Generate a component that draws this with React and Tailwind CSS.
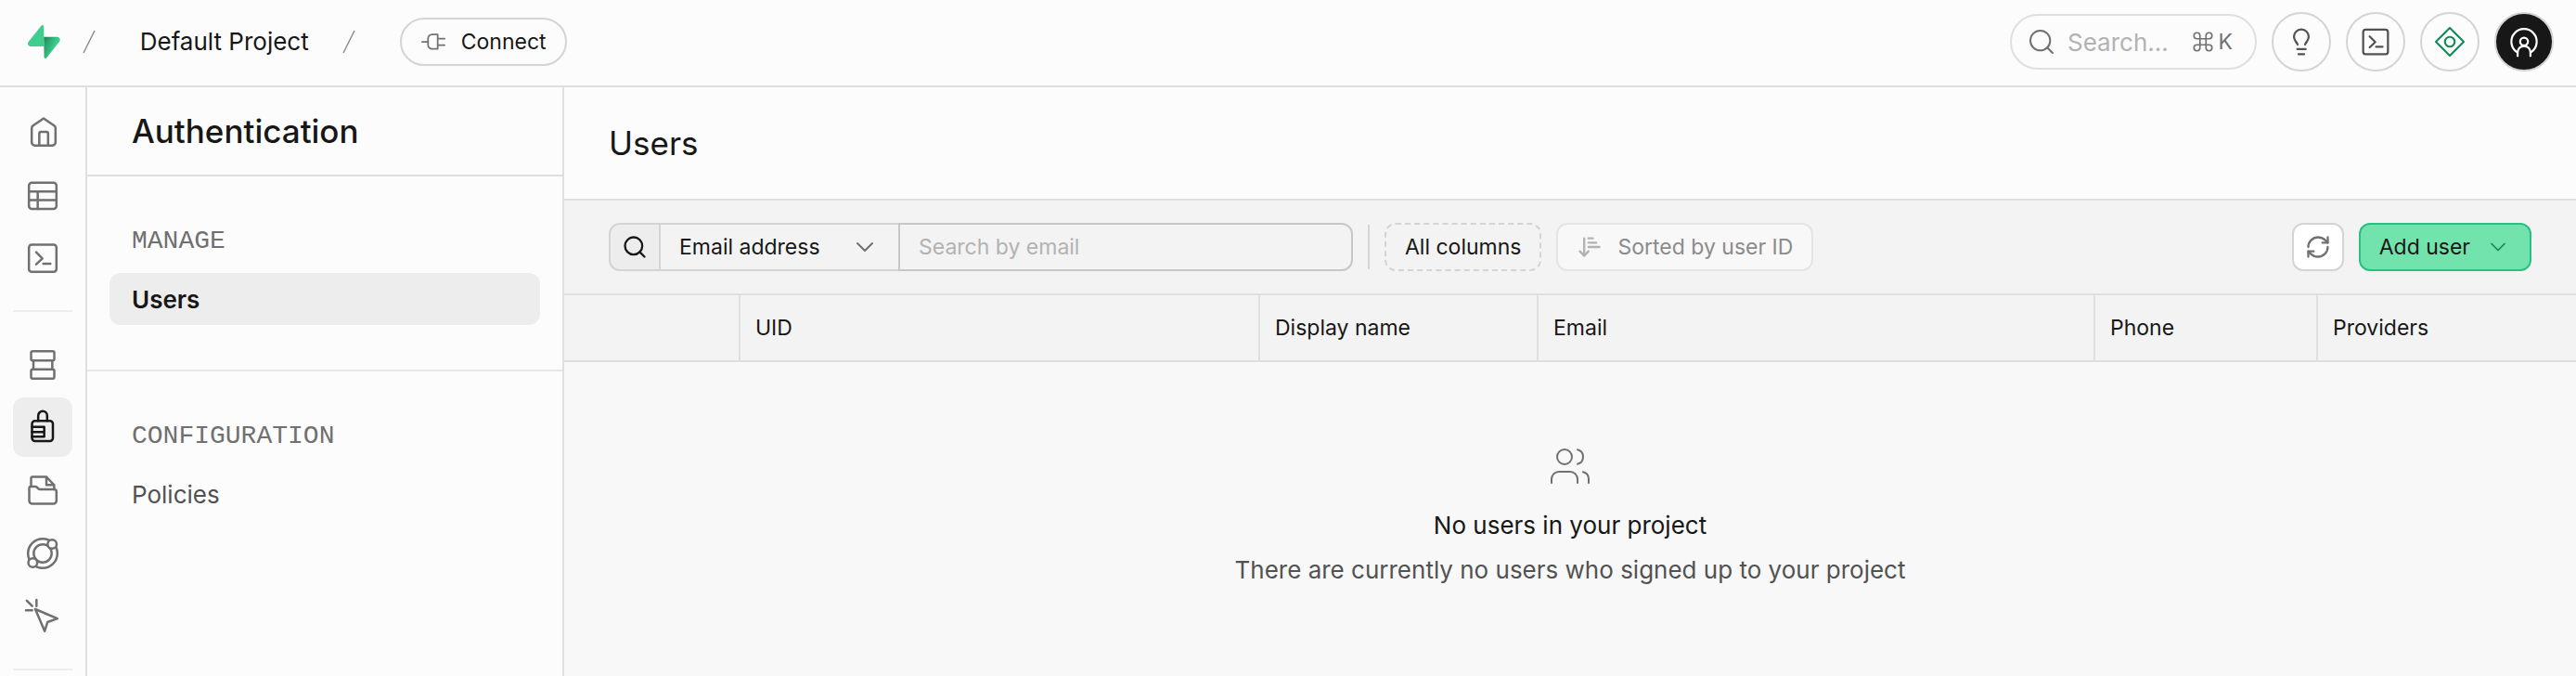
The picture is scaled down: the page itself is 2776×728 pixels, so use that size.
import React, { useState } from 'react';
import {
    ArrowDownNarrowWide,
    ChevronDown,
    Command,
    RefreshCw,
    Search,
    Users,
} from 'lucide-react';

const Icon = ({ children, className = 'size-10', strokeWidth = 1.5 }) => (
    <svg
        viewBox="0 0 24 24"
        fill="none"
        stroke="currentColor"
        strokeWidth={strokeWidth}
        strokeLinecap="round"
        strokeLinejoin="round"
        className={className}
        aria-hidden="true"
    >
        {children}
    </svg>
);

const HomeIcon = () => (
    <Icon>
        <path d="M12.6 3.3 19.4 8q.9.6.9 1.6v9.2a2 2 0 0 1-2 2H6.9a2 2 0 0 1-2-2V9.6q0-1 .9-1.6Z" />
        <path d="M9.8 20.8V13a1 1 0 0 1 1-1h3.7a1 1 0 0 1 1 1v7.8" />
    </Icon>
);

const TableIcon = () => (
    <Icon>
        <rect x="3.1" y="4" width="17.8" height="17" rx="2" />
        <path d="M3.1 9.7h17.8M3.1 15.3h17.8M8.8 9.7V21" />
    </Icon>
);

const TerminalIcon = ({ className }) => (
    <Icon className={className}>
        <rect x="3.1" y="3.3" width="17.8" height="17.6" rx="1.8" />
        <path d="m7.8 8.2 4 4-4 3.8M12.4 15.6H17" />
    </Icon>
);

const DatabaseIcon = () => (
    <Icon>
        <rect x="4.5" y="3.8" width="15" height="5.9" rx="1" />
        <rect x="4.5" y="15.5" width="15" height="5.9" rx="1" />
        <path d="M6 9.7v5.8M18.2 9.7v5.8" />
    </Icon>
);

const AuthIcon = () => (
    <Icon>
        <rect x="5.1" y="7.9" width="13.5" height="13.1" rx="2" />
        <path d="M9.1 7.9V4.6a2.9 2.9 0 0 1 5.8 0v3.3M5.1 11.9H13v6.3H5.1M5.1 15.1H13" />
    </Icon>
);

const StorageIcon = () => (
    <Icon>
        <path d="M4.5 9.6V4.3a1 1 0 0 1 1-1h8.9l5 5.3v2.8M14.4 3.3v5.3h5" />
        <path d="M3.3 10.6a1 1 0 0 1 1-1h3.1a1 1 0 0 1 .7.3l1.3 1.2a1 1 0 0 0 .7.3h9.3a1.5 1.5 0 0 1 1.5 1.5v5.8a2 2 0 0 1-2 2H5.3a2 2 0 0 1-2-2Z" />
    </Icon>
);

const FunctionsIcon = () => (
    <Icon>
        <circle cx="12" cy="12" r="9.5" />
        <circle cx="12" cy="12" r="5.8" />
        <circle cx="18.1" cy="6" r="2.9" className="fill-[#fcfcfc]" />
        <circle cx="5.6" cy="18" r="2.9" className="fill-[#fcfcfc]" />
    </Icon>
);

const RealtimeIcon = () => (
    <Icon>
        <path d="m7.2 7.2 14.3 6.1-6.4 2.3-1.8 5.8ZM1.7 1.7l3.5 3.5M8 1.2v4M1.2 8h4" />
    </Icon>
);

const PlugIcon = () => (
    <Icon className="size-7">
        <path d="M1.6 12h5.5M16 5.2v13.4M16 5.2h-5.2a3.7 3.7 0 0 0-3.7 3.7v6a3.7 3.7 0 0 0 3.7 3.7H16M16 9.1h6.4M16 15.1h6.4" />
    </Icon>
);

const BulbIcon = () => (
    <Icon className="size-9">
        <path d="M9.3 14C8.6 12 6.7 11 6.7 8.4a5.3 5.3 0 0 1 10.6 0c0 2.6-1.9 3.6-2.6 5.6M9.1 17.3h6M10 20.9h4" />
    </Icon>
);

const AssistantIcon = () => (
    <Icon className="size-9" strokeWidth={1.4}>
        <path d="M12 2 22 12 12 22 2 12Z" />
        <circle cx="12" cy="12" r="3.5" />
    </Icon>
);

const AccountIcon = () => (
    <Icon className="size-9">
        <path d="M6.7 19.3a9.1 9.1 0 1 1 10.6 0" />
        <circle cx="12" cy="11.8" r="2.8" />
        <path d="M7.4 22.2v-2.6a4.6 4.6 0 0 1 9.2 0v2.6" />
    </Icon>
);

const Logo = () => (
    <svg viewBox="0 0 109 113" className="h-9" aria-hidden="true">
        <defs>
            <linearGradient id="bolt" x1="53.97" y1="54.97" x2="94.16" y2="71.83" gradientUnits="userSpaceOnUse">
                <stop stopColor="#249361" />
                <stop offset="1" stopColor="#3ecf8e" />
            </linearGradient>
            <linearGradient id="shade" x1="36.16" y1="30.58" x2="54.48" y2="65.08" gradientUnits="userSpaceOnUse">
                <stop />
                <stop offset="1" stopOpacity="0" />
            </linearGradient>
        </defs>
        <path d="M63.7 110.3c-2.9 3.6-8.7 1.6-8.7-3l-1-67.3h45.2c8.2 0 12.8 9.5 7.7 15.9Z" fill="url(#bolt)" />
        <path d="M63.7 110.3c-2.9 3.6-8.7 1.6-8.7-3l-1-67.3h45.2c8.2 0 12.8 9.5 7.7 15.9Z" fill="url(#shade)" fillOpacity="0.2" />
        <path d="M45.3 2.1c2.9-3.6 8.7-1.6 8.7 3l.4 67.2H9.8C1.7 72.3-2.9 62.8 2.1 56.4Z" fill="#3ecf8e" />
    </svg>
);

const Slash = () => (
    <svg viewBox="0 0 14 26" fill="none" stroke="#8f8f8f" strokeWidth="1.6" className="h-[26px] w-3.5" aria-hidden="true">
        <path d="M13 1 1 25" />
    </svg>
);

const railTop = [
    { name: 'Home', icon: HomeIcon },
    { name: 'Table editor', icon: TableIcon },
    { name: 'SQL editor', icon: TerminalIcon },
];

const railBottom = [
    { name: 'Database', icon: DatabaseIcon },
    { name: 'Authentication', icon: AuthIcon, active: true },
    { name: 'Storage', icon: StorageIcon },
    { name: 'Edge functions', icon: FunctionsIcon },
    { name: 'Realtime', icon: RealtimeIcon },
];

const RailGroup = ({ items }) => (
    <div className="flex flex-col items-center gap-1">
        {items.map(({ name, icon: ItemIcon, active }) => (
            <a
                key={name}
                href="#"
                aria-label={name}
                className={`flex size-16 items-center justify-center rounded-xl ${active ? 'bg-[#ededed] text-[#171717]' : 'text-[#707070]'}`}
            >
                <ItemIcon />
            </a>
        ))}
    </div>
);

const RoundButton = ({ label, children, className = 'border-[#d4d4d4] text-[#525252]' }) => (
    <button aria-label={label} className={`flex size-16 items-center justify-center rounded-full border-2 ${className}`}>
        {children}
    </button>
);

const Header = () => (
    <header className="flex h-[94px] items-center justify-between border-b-2 border-[#dfdfdf] pr-6 pb-0.5 pl-[30px]">
        <div className="flex items-center">
            <a href="#" aria-label="Dashboard">
                <Logo />
            </a>
            <div className="ml-6 flex items-center">
                <Slash />
                <a href="#" className="mr-9 ml-12 text-[26px] leading-10">Default Project</a>
                <Slash />
            </div>
            <button className="ml-12 flex h-[52px] items-center gap-4 rounded-full border-2 border-[#d4d4d4] px-5 text-[23px]">
                <span className="text-[#707070]"><PlugIcon /></span>
                Connect
            </button>
        </div>
        <div className="flex items-center gap-4">
            <button className="flex h-[60px] w-[266px] items-center rounded-full border-2 border-[#dfdfdf] pr-6 pl-4 text-[#707070]">
                <Search size={32} strokeWidth={1.5} />
                <span className="ml-3 text-[26px] text-[#b2b2b2]">Search...</span>
                <span className="ml-auto flex items-center gap-1 text-[23px]">
                    <Command size={26} strokeWidth={1.5} />K
                </span>
            </button>
            <RoundButton label="Help">
                <BulbIcon />
            </RoundButton>
            <RoundButton label="SQL">
                <TerminalIcon className="size-9" />
            </RoundButton>
            <RoundButton label="Assistant" className="border-[#d4d4d4] text-[#0f8a56]">
                <AssistantIcon />
            </RoundButton>
            <RoundButton label="Account" className="border-[#d4d4d4] bg-[#171717] text-white">
                <AccountIcon />
            </RoundButton>
        </div>
    </header>
);

const MenuSection = ({ title, children }) => (
    <section className="px-6 py-12">
        <h2 className="mb-3 px-6 font-['Liberation_Mono',monospace] text-[28px] leading-11 text-[#707070]">{title}</h2>
        {children}
    </section>
);

const columns = [
    { label: '', width: 'w-[190px]' },
    { label: 'UID', width: 'w-[560px]' },
    { label: 'Display name', width: 'w-[300px]' },
    { label: 'Email', width: 'w-[600px]' },
    { label: 'Phone', width: 'w-[240px]' },
    { label: 'Providers', width: '' },
];

const Toolbar = () => {
    const [query, setQuery] = useState('');

    return (
        <div className="flex items-center justify-between border-b-2 border-[#dfdfdf] bg-[#f3f3f3] px-12 py-6 text-[23px]">
            <div className="flex items-center gap-4">
                <div className="flex h-[52px]">
                    <span className="flex w-14 items-center justify-center rounded-l-xl border-2 border-[#d4d4d4] bg-[#ededed]">
                        <Search size={28} />
                    </span>
                    <div className="relative flex items-center border-y-2 border-[#d4d4d4] text-[#171717]">
                        <select aria-label="Search column" className="h-full w-64 appearance-none pl-5">
                            <option>Email address</option>
                            <option>Phone number</option>
                            <option>User ID</option>
                        </select>
                        <ChevronDown size={32} strokeWidth={1.5} className="pointer-events-none absolute right-5 text-[#707070]" />
                    </div>
                    <input
                        aria-label="Search by email"
                        placeholder="Search by email"
                        value={query}
                        onChange={(e) => setQuery(e.target.value)}
                        className="w-[490px] rounded-r-xl border-2 border-[#c7c7c7] px-5 placeholder:text-[#b2b2b2]"
                    />
                </div>
                <div className="h-12 w-0.5 bg-[#d4d4d4]" />
                <button className="h-[52px] rounded-xl border-2 border-dashed border-[#d4d4d4] px-5">All columns</button>
                <button className="flex h-[52px] items-center gap-4 rounded-xl border-2 border-[#e4e4e4] bg-[#f8f8f8] px-5 text-[#8b8b8b]">
                    <ArrowDownNarrowWide size={28} className="text-[#b2b2b2]" />
                    Sorted by user ID
                </button>
            </div>
            <div className="flex items-center gap-4">
                <button aria-label="Refresh" className="flex h-[52px] w-14 items-center justify-center rounded-xl border-2 border-[#d4d4d4] bg-white text-[#707070]">
                    <RefreshCw size={28} />
                </button>
                <button className="flex h-[52px] items-center gap-4 rounded-xl border-2 border-[#2bbf84] bg-[#72e3ad] px-5">
                    Add user
                    <ChevronDown size={28} strokeWidth={1.5} className="text-[#0f8a56]" />
                </button>
            </div>
        </div>
    );
};

const App = () => (
    <div className="flex min-h-screen flex-col bg-[#fcfcfc] font-['Inter',sans-serif] text-[#171717]">
        <Header />
        <div className="flex grow">
            <nav className="flex w-[94px] shrink-0 flex-col gap-6 border-r-2 border-[#dfdfdf] px-3.5 pt-4">
                <RailGroup items={railTop} />
                <hr className="w-full border-t-2 border-[#ededed]" />
                <RailGroup items={railBottom} />
                <hr className="w-full border-t-2 border-[#ededed]" />
            </nav>

            <aside className="w-[514px] shrink-0 border-r-2 border-[#dfdfdf]">
                <div className="flex h-24 items-center border-b-2 border-[#dfdfdf] px-12 text-[35px] font-medium">
                    Authentication
                </div>
                <MenuSection title="MANAGE">
                    <a href="#" className="flex h-14 items-center rounded-xl bg-[#ededed] px-6 text-[26px] font-semibold">Users</a>
                </MenuSection>
                <hr className="border-t-2 border-[#e6e6e6]" />
                <MenuSection title="CONFIGURATION">
                    <a href="#" className="flex h-14 items-center px-6 text-[26px] text-[#525252]">Policies</a>
                </MenuSection>
            </aside>

            <main className="flex min-w-0 grow flex-col bg-[#f8f8f8]">
                <div className="flex h-[122px] items-center border-b-2 border-[#dfdfdf] bg-[#fcfcfc] px-12">
                    <h1 className="text-[35px]">Users</h1>
                </div>
                <Toolbar />
                <table className="w-full table-fixed border-separate border-spacing-0">
                    <thead>
                        <tr className="h-[72px] bg-[#f3f3f3] text-left text-[23px]">
                            {columns.map(({ label, width }) => (
                                <th key={label} scope="col" className={`border-r-2 border-b-2 border-[#dfdfdf] px-4 font-normal last:border-r-0 ${width}`}>
                                    {label}
                                </th>
                            ))}
                        </tr>
                    </thead>
                </table>
                <div className="flex flex-col items-center pt-[88px] text-[26px]">
                    <Users size={48} strokeWidth={1} className="text-[#707070]" />
                    <p className="mt-4 leading-12">No users in your project</p>
                    <p className="leading-12 text-[#525252]">There are currently no users who signed up to your project</p>
                </div>
            </main>
        </div>
    </div>
);

export default App;
